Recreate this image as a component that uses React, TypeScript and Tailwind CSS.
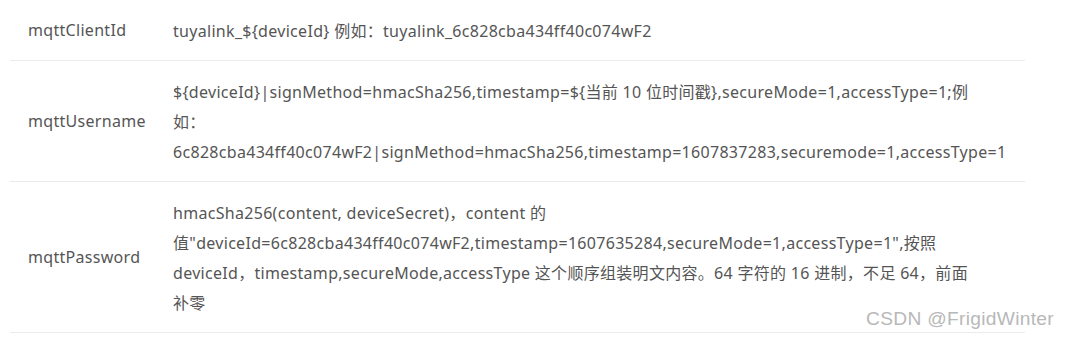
const rows: { name: string; lines: string[] }[] = [
  {
    name: "mqttClientId",
    lines: ["tuyalink_${deviceId} 例如：tuyalink_6c828cba434ff40c074wF2"],
  },
  {
    name: "mqttUsername",
    lines: [
      "${deviceId}|signMethod=hmacSha256,timestamp=${当前 10 位时间戳},secureMode=1,accessType=1;例",
      "如：",
      "6c828cba434ff40c074wF2|signMethod=hmacSha256,timestamp=1607837283,securemode=1,accessType=1",
    ],
  },
  {
    name: "mqttPassword",
    lines: [
      "hmacSha256(content, deviceSecret)，content 的",
      '值"deviceId=6c828cba434ff40c074wF2,timestamp=1607635284,secureMode=1,accessType=1",按照',
      "deviceId，timestamp,secureMode,accessType 这个顺序组装明文内容。64 字符的 16 进制，不足 64，前面",
      "补零",
    ],
  },
]

export default function App() {
  return (
    <div className="relative h-[339px] w-[1069px] bg-white font-['Noto_Sans','Noto_Sans_CJK_SC',sans-serif] text-[16px] leading-[30px] tracking-[0.3px] text-[#555555]">
      <div className="ml-[10px] w-[1015px]">
        {rows.map((row) => (
          <div key={row.name} className="grid grid-cols-[145px_1fr] border-b border-[#ebebeb]">
            <div className="flex items-center px-[18px] py-[15px]">{row.name}</div>
            <div className="py-[15px] pl-[18px] pr-[19px] pt-[16px] pb-[14px]">
              {row.lines.map((line, i) => (
                <div key={i} className="whitespace-nowrap">
                  {line}
                </div>
              ))}
            </div>
          </div>
        ))}
      </div>

      {/* watermark */}
      <div className="absolute left-[866px] top-[307px] font-['Liberation_Sans',sans-serif] text-[19.2px] leading-[24px] text-[#b8b8b8]">
        CSDN @FrigidWinter
      </div>
    </div>
  )
}
